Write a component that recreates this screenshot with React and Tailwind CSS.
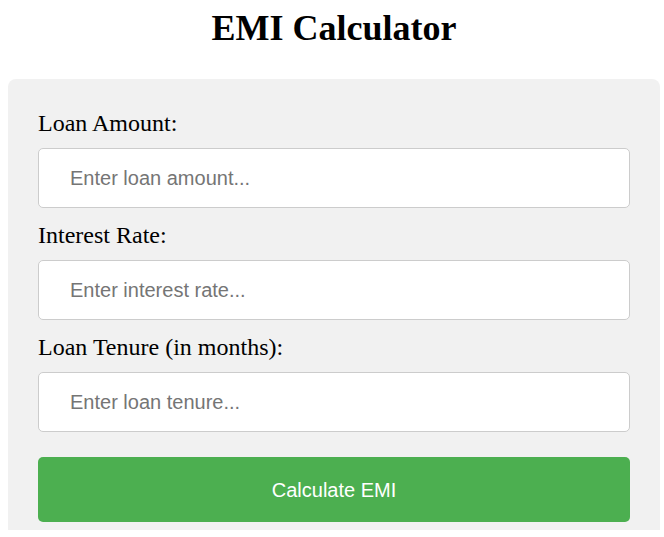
import React, { useState } from 'react';

const fields = [
    { name: 'amount', label: 'Loan Amount:', placeholder: 'Enter loan amount...' },
    { name: 'rate', label: 'Interest Rate:', placeholder: 'Enter interest rate...' },
    { name: 'tenure', label: 'Loan Tenure (in months):', placeholder: 'Enter loan tenure...' },
];

const App = () => {
    const [values, setValues] = useState({});

    const handleChange = (name, value) => {
        setValues((prev) => ({ ...prev, [name]: value }));
    };

    return (
        <div className="bg-white min-h-[537px] pl-2 pt-2">
            <div className="w-[652px]">
                <h1 className="text-center text-[36px] leading-[41px] font-bold text-black font-['Liberation_Serif',serif] mb-[30px]">
                    EMI Calculator
                </h1>

                <div className="bg-[#f1f1f1] rounded-t-lg px-[30px] pt-[31px] pb-2">
                    {fields.map((field) => (
                        <div key={field.name} className="mb-[14px]">
                            <label
                                htmlFor={field.name}
                                className="block text-[24px] leading-[26px] text-black font-['Liberation_Serif',serif] mb-3"
                            >
                                {field.label}
                            </label>
                            <input
                                id={field.name}
                                type="number"
                                value={values[field.name] || ''}
                                onChange={(e) => handleChange(field.name, e.target.value)}
                                placeholder={field.placeholder}
                                className="block w-full h-[60px] pl-[31px] pr-4 bg-white border border-[#cccccc] rounded-[5px] text-[20px] font-['Liberation_Sans',Arial,sans-serif] text-black placeholder:text-[#757575] outline-none [appearance:textfield] [&::-webkit-inner-spin-button]:appearance-none"
                            />
                        </div>
                    ))}

                    <button
                        type="button"
                        className="block w-full h-[65px] mt-[25px] bg-[#4caf50] text-white rounded-[5px] text-[20px] font-['Liberation_Sans',Arial,sans-serif]"
                    >
                        Calculate EMI
                    </button>
                </div>
            </div>
        </div>
    );
};

export default App;
